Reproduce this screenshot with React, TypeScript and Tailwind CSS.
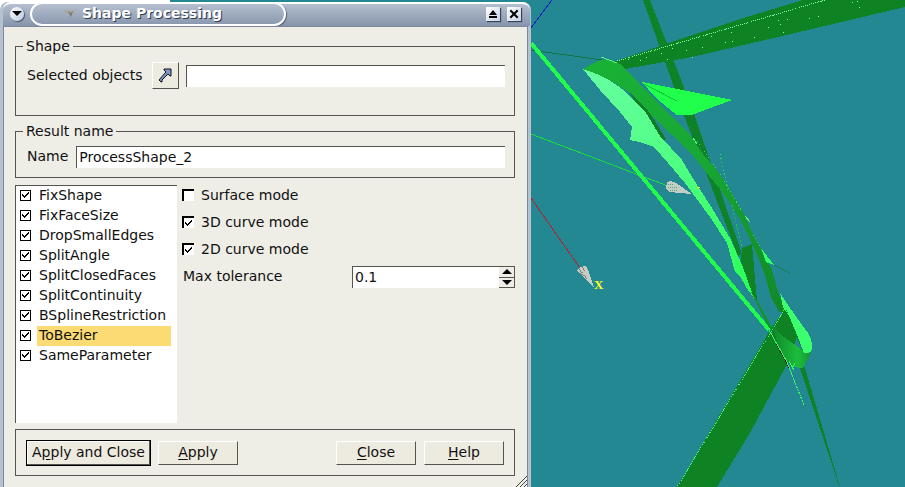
import { useState, type ReactNode } from "react";
import clsx from "clsx";

interface Operator {
    id: string;
    checked: boolean;
}

const OPERATORS: Operator[] = [
    "FixShape",
    "FixFaceSize",
    "DropSmallEdges",
    "SplitAngle",
    "SplitClosedFaces",
    "SplitContinuity",
    "BSplineRestriction",
    "ToBezier",
    "SameParameter",
].map((id) => ({ id, checked: true }));

const SPECKS = [
    [628, 59], [640, 60], [646, 57], [661, 53], [667, 59], [672, 48], [686, 50], [702, 47],
    [711, 36], [725, 42], [731, 32], [732, 41], [754, 37], [768, 27], [778, 20], [783, 32],
    [780, 24], [809, 18], [818, 16], [787, 19], [692, 57], [706, 34], [852, 2], [859, 7], [857, 1],
];

const Tick = ({ className }: { className: string }) => (
    <svg viewBox="0 0 7 7" className={clsx("pointer-events-none absolute h-[7px] w-[7px]", className)} shapeRendering="crispEdges">
        <path d="M0 2h1v1h1v1h1v-1h1v-1h1v-1h1v-1h1v2h-1v1h-1v1h-1v1h-1v1h-1v-1h-1v-1h-1z" fill="black" />
    </svg>
);

const Group = ({ title, className, children }: { title: string; className: string; children: ReactNode }) => (
    <fieldset className={clsx("min-w-0 border border-[#555550] pr-[9px] pl-[11px]", className)}>
        <legend className="-ml-[4px] px-[3px] leading-[18px]">{title}</legend>
        {children}
    </fieldset>
);

const PushButton = ({ mnemonic, before = "", after, isDefault }: { mnemonic: string; before?: string; after: string; isDefault?: boolean }) => (
    <button
        type="button"
        className={clsx(
            "border bg-[#edeadf] pb-[2px] text-center whitespace-nowrap",
            isDefault
                ? "h-[26px] w-[125px] border-black shadow-[inset_-1px_-1px_0_#555550,inset_1px_1px_0_#ffffff]"
                : "h-[24px] w-[80px] border-t-white border-r-[#555550] border-b-[#555550] border-l-white"
        )}
    >
        {before}
        <span className="underline underline-offset-2">{mnemonic}</span>
        {after}
    </button>
);

const ModeCheck = ({ id, label, initial }: { id: string; label: string; initial: boolean }) => {
    const [on, setOn] = useState(initial);

    return (
        <div className="flex h-[20px] items-center gap-[7px]">
            <span className="relative flex">
                <input
                    id={id}
                    type="checkbox"
                    checked={on}
                    onChange={() => setOn(!on)}
                    className="h-[12px] w-[12px] appearance-none border-t-2 border-l-2 border-black bg-white"
                />
                {on && <Tick className="top-[4px] left-[3px]" />}
            </span>
            <label htmlFor={id}>{label}</label>
        </div>
    );
};

const TitleBar = () => (
    <header className="flex h-[24px] items-center rounded-t-lg border-t-2 border-white bg-linear-to-b from-[#b5bfd0] to-[#8795ab] pr-[9px] pb-[2px] pl-[7px]">
        <button type="button" aria-label="Window menu" className="mr-[6px] flex h-[14px] w-[14px] items-center justify-center rounded-full bg-linear-to-br from-white to-[#b8c8dc] shadow-[1px_1px_1px_#42536b]">
            <svg viewBox="0 0 10 6" className="h-[6px] w-[10px]"><path d="M0 0h10L5 5z" /></svg>
        </button>
        <div className="flex h-[24px] w-1/2 min-w-0 items-center rounded-xl border-2 border-white pb-[2px] pl-[31px] shadow-[1px_1px_1px_#56657c]">
            <svg viewBox="0 0 14 12" className="mr-[5px] h-[12px] w-[14px] shrink-0">
                <path d="M0 2l5 2 3-1 1 1 5-2-4 4-2 1-1 4-1-4-3-1z" fill="#aaa798" />
                <path d="M5 4l3 2 2-2-2 6z" fill="#77786f" />
            </svg>
            <h1 className="text-[14px] font-bold whitespace-nowrap text-white [text-shadow:1px_1px_0_#303c50]">Shape Processing</h1>
        </div>
        <div className="ml-auto flex gap-[7px]">
            <button type="button" aria-label="Maximize" className="h-[14px] w-[14px] bg-linear-to-br from-white to-[#c7d3e2] shadow-[1px_1px_1px_#35455d]">
                <svg viewBox="0 0 14 14" className="h-[14px] w-[14px]"><path d="M7 3l4 5H3zM3 9h8v2H3z" /></svg>
            </button>
            <button type="button" aria-label="Close window" className="h-[14px] w-[14px] bg-linear-to-br from-white to-[#c7d3e2] shadow-[1px_1px_1px_#35455d]">
                <svg viewBox="0 0 14 14" className="h-[14px] w-[14px]"><path d="M4 4l6 6M10 4l-6 6" stroke="black" strokeWidth="2" strokeLinecap="square" /></svg>
            </button>
        </div>
    </header>
);

const Scene = () => (
    <svg viewBox="531 0 374 487" preserveAspectRatio="xMinYMin slice" className="absolute inset-0 h-full w-full" shapeRendering="crispEdges">
        <defs>
            <linearGradient id="ribbon" x1="0" y1="0" x2="1" y2="1">
                <stop offset="0" stopColor="#19b236" />
                <stop offset="0.5" stopColor="#18a735" />
                <stop offset="1" stopColor="#128727" />
            </linearGradient>
            <linearGradient id="mint" x1="0" y1="0" x2="1" y2="1">
                <stop offset="0" stopColor="#68ffa4" />
                <stop offset="0.5" stopColor="#4eff80" />
                <stop offset="1" stopColor="#27ff55" />
            </linearGradient>
            <linearGradient id="band">
                <stop offset="0" stopColor="#11892a" />
                <stop offset="0.65" stopColor="#1cbd3c" />
                <stop offset="1" stopColor="#159632" />
            </linearGradient>
        </defs>
        {/* axes */}
        <path d="M552 0L531 28" stroke="#0b22c0" />
        <path d="M531 134L668 186" stroke="#16dd3c" />
        <path d="M531 198L582 271" stroke="#b32334" />
        <path d="M531 50L602 60" stroke="#117545" />
        {/* far beams */}
        <path d="M643 0h7L692 108 742 254 738 256 685 118z" fill="#0f8227" />
        <path d="M613 62L660 46 740 19 803 0H905V7L778 37 692 57 625 69z" fill="#0f8223" />
        <path d="M617 61L825 0" stroke="#78ff9d" strokeDasharray="1 1" />
        {SPECKS.map(([x, y]) => (
            <rect key={`${x}-${y}`} x={x} y={y} width="1" height="1" fill="#7dffa0" />
        ))}
        <path d="M531 43L769 330" stroke="#21fb4c" strokeWidth="4" />
        {/* blade */}
        <path d="M642 82L732 100 705 110 692 115H677L668 108 655 97z" fill="#1fff4c" />
        <path d="M644 84L677 101" stroke="#16c339" />
        <path d="M628 90L645 105 666 139 660 141z" fill="#0f7d25" />
        <path d="M583 69Q592 63 601 60L610 60Q618 61 626 69L652 97 672 117 690 135 703 154 716 169 724 180 735 199 745 216 750 228 756 240 766 257 772 270 778 292 786 312 779 312 771 297 765 275 758 257 748 235 740 219 731 205 720 189 709 176 690 152 653 117 643 105 630 93 613 82z" fill="url(#ribbon)" />
        <path d="M601 57L617 63M693 138L697 144M745 216L750 222" stroke="#5cf783" />
        <path d="M697 141L722 177M724 181L741 210M753 235L765 256M720 154L728 190" stroke="#37d561" strokeDasharray="1 3" />
        <path d="M690 174L707 202 700 199z" fill="#0f7d25" />
        <path d="M583 69Q612 78 630 96L646 113 660 136 682 160 692 177 710 205 730 238 742 265 756 301 746 287 740 276 735 272 727 243 710 217 685 183 668 163 654 147Q642 142 630 140L632 127 620 112 600 90z" fill="url(#mint)" />
        <path d="M742 248L752 244 757 301 754 298 741 262z" fill="#0f8223" />
        <path d="M732 205L742 248" stroke="#18c942" strokeDasharray="2 2" />
        <path d="M761 248L774 265 766 262z" fill="#32ff68" />
        <path d="M774 265L790 273" stroke="#148347" />
        <path d="M750 290L758 302 773 329 769 328z" fill="#11952b" />
        {/* lower joint */}
        <path d="M786 307L797 335 801 347 785 368 750 433 717 487H677L769 332z" fill="#0f8223" />
        <path d="M786 307L677 487" stroke="#45ff70" strokeDasharray="1 1" />
        <path d="M799 365L804 365 840 487 838 483z" fill="#0f8227" />
        <path d="M773 327Q788 343 811 353L803 368 793 367 780 352z" fill="url(#band)" />
        <path d="M796 337L805 352 795 345z" fill="#238892" />
        <path d="M780 293L786 302 797 318 808 333Q812 340 812 346Q812 355 804 353L797 335 790 318 783 307z" fill="#3cff70" />
        <path d="M786 310L803 351" stroke="#0f8227" strokeDasharray="1 1" />
        <path d="M769 330L787 362 792 375" stroke="#35fb60" />
        <path d="M792 375L804 405" stroke="#35fb60" strokeDasharray="2 1" />
        <path d="M789 361L794 370M792 369L795 363" stroke="#35fb60" />
        {/* axis arrows */}
        <path d="M667 182L671 181 676 183 692 194 669 192 666 188z" fill="#c2cdc5" />
        <path d="M668 184h6M668 187h9M670 190h7" stroke="#4cae6b" strokeDasharray="1 1" />
        <path d="M577 271L580 267 586 266 588 270 594 287z" fill="#c2cdc5" />
        <path d="M579 269L588 280M582 267L586 272M580 273L588 279" stroke="#8f7776" strokeDasharray="1 1" />
        <path d="M697 187h3M698 188v1" stroke="#e4f22a" />
        <text x="594" y="289" fill="#ffff1f" fontSize="13" fontWeight="bold" fontFamily="Liberation Serif, serif">X</text>
    </svg>
);

export default function App() {
    const [operators, setOperators] = useState(OPERATORS);
    const [current, setCurrent] = useState("ToBezier");
    const [name, setName] = useState("ProcessShape_2");
    const [objects, setObjects] = useState("");
    const [tolerance, setTolerance] = useState("0.1");

    const toggle = (id: string) =>
        setOperators(operators.map((op) => (op.id === id ? { ...op, checked: !op.checked } : op)));

    const step = (delta: number) => setTolerance(String(Math.max(0, Math.round((Number(tolerance) + delta) * 10) / 10)));

    const field = "h-[22px] min-w-0 flex-1 border-t border-l border-[#555550] bg-white px-[2px] pb-[2px] outline-none";

    return (
        <div className="grid min-h-screen grid-cols-[minmax(0,531fr)_minmax(0,374fr)] bg-[#238892] font-['DejaVu_Sans',sans-serif] text-[14px] leading-[18px] text-[#111111]">
            <div className="flex flex-col bg-linear-to-r from-white from-32% to-[#238892] to-32% pt-[2px]">
                <section className="flex flex-1 flex-col rounded-t-lg bg-[#b5c1cf] pr-[1px] pl-[3px]">
                    <TitleBar />
                    <form
                        onSubmit={(e) => e.preventDefault()}
                        className="relative mr-[2px] flex flex-1 flex-col border-x border-t border-[#7b889b] bg-[#eeede6] pt-[10px] pr-[12px] pb-[11px] pl-[11px]"
                    >
                        <Group title="Shape" className="pt-[7px] pb-[26px]">
                            <div className="flex items-center">
                                <label htmlFor="objects" className="mr-[9px] pb-[2px] whitespace-nowrap">Selected objects</label>
                                <button type="button" aria-label="Select" className="mr-[7px] flex h-[27px] w-[27px] shrink-0 items-center justify-center border border-t-white border-r-[#555550] border-b-[#555550] border-l-white bg-[#edeadf]">
                                    <svg viewBox="0 0 16 16" className="h-4 w-4">
                                        <path d="M7 1h7v7h-1l-2-2-6 6v2H4l-2-2 7-8-2-2z" fill="#8094c4" stroke="#10151f" strokeLinejoin="round" />
                                    </svg>
                                </button>
                                <input id="objects" value={objects} onChange={(e) => setObjects(e.target.value)} className={field} />
                            </div>
                        </Group>

                        <Group title="Result name" className="mt-[6px] pt-[6px] pb-[9px]">
                            <div className="flex items-center gap-[8px]">
                                <label htmlFor="name" className="pb-[2px]">Name</label>
                                <input id="name" value={name} onChange={(e) => setName(e.target.value)} className={field} />
                            </div>
                        </Group>

                        <div className="mt-[7px] flex min-h-[238px] flex-1 gap-[5px]">
                            <ul className="w-[162px] shrink-0 border-t border-l border-[#555550] bg-white pr-[6px] pl-[4px]">
                                {operators.map((op) => (
                                    <li key={op.id} className="flex h-[20px] items-center gap-[6px]" onClick={() => setCurrent(op.id)}>
                                        <span className="relative mb-[2px] flex shrink-0">
                                            <input
                                                id={op.id}
                                                type="checkbox"
                                                checked={op.checked}
                                                onChange={() => toggle(op.id)}
                                                className="h-[11px] w-[11px] appearance-none border border-black bg-white"
                                            />
                                            {op.checked && <Tick className="top-[2px] left-[2px]" />}
                                        </span>
                                        <label htmlFor={op.id} className={clsx("min-w-0 flex-1 pb-[2px] pl-[2px] whitespace-nowrap", current === op.id && "bg-[#fcdb75]")}>
                                            {op.id}
                                        </label>
                                    </li>
                                ))}
                            </ul>
                            <div className="flex min-w-0 flex-1 flex-col gap-[7px]">
                                <ModeCheck id="surface" label="Surface mode" initial={false} />
                                <ModeCheck id="curve3d" label="3D curve mode" initial />
                                <ModeCheck id="curve2d" label="2D curve mode" initial />
                                <div className="flex items-center justify-between">
                                    <label htmlFor="tolerance" className="pb-[2px] pl-[1px]">Max tolerance</label>
                                    <div className="flex h-[22px] w-1/2 max-w-[163px] border-t border-l border-[#555550] bg-white">
                                        <input id="tolerance" inputMode="decimal" value={tolerance} onChange={(e) => setTolerance(e.target.value)} className="min-w-0 flex-1 px-[2px] pb-[2px] outline-none" />
                                        <div className="flex w-[16px] flex-col">
                                            <button type="button" aria-label="Increase" onClick={() => step(0.1)} className="flex flex-1 items-center justify-center border-r border-b border-[#555550] bg-[#eeede6]">
                                                <svg viewBox="0 0 10 5" className="h-[5px] w-[10px]"><path d="M5 0l5 5H0z" /></svg>
                                            </button>
                                            <button type="button" aria-label="Decrease" onClick={() => step(-0.1)} className="flex flex-1 items-center justify-center border-r border-b border-[#555550] bg-[#eeede6]">
                                                <svg viewBox="0 0 10 5" className="h-[5px] w-[10px]"><path d="M0 0h10L5 5z" /></svg>
                                            </button>
                                        </div>
                                    </div>
                                </div>
                            </div>
                        </div>

                        <div className="mt-[6px] flex h-[47px] items-center gap-[7px] border border-[#555550] px-[10px]">
                            <PushButton before="A" mnemonic="p" after="ply and Close" isDefault />
                            <PushButton mnemonic="A" after="pply" />
                            <div className="ml-auto flex gap-[8px]">
                                <PushButton mnemonic="C" after="lose" />
                                <PushButton mnemonic="H" after="elp" />
                            </div>
                        </div>
                        <svg viewBox="0 0 11 11" className="absolute right-0 bottom-0 h-[11px] w-[11px]">
                            <path d="M0 11L11 0M4 11L11 4M8 11L11 8" stroke="#444444" />
                        </svg>
                    </form>
                </section>
            </div>
            <main className="relative overflow-hidden" aria-label="3D view">
                <Scene />
            </main>
        </div>
    );
}
